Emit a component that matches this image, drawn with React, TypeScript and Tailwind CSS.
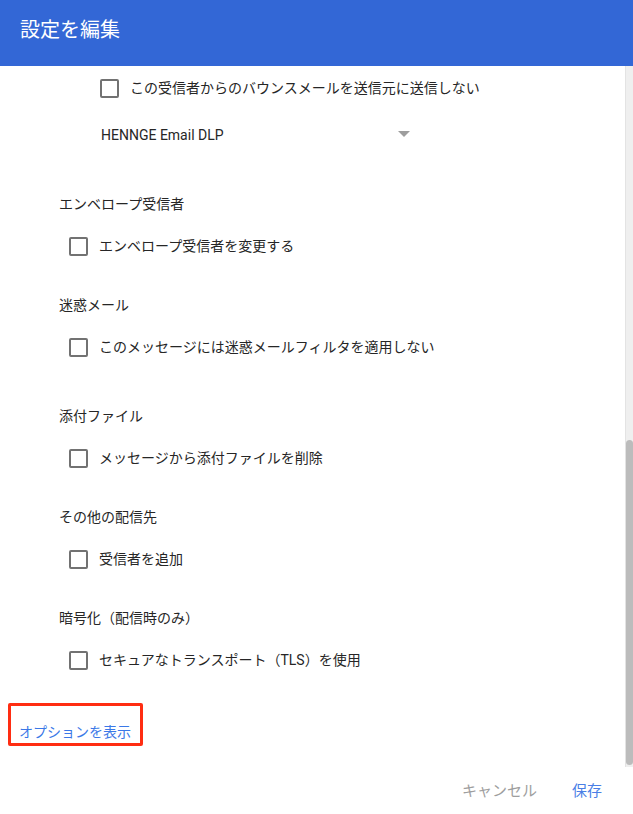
import React from "react";

const FONT = {
  fontFamily: 'Roboto, "Noto Sans CJK JP", "Noto Sans", sans-serif',
};

function Checkbox({ label }: { label: string }) {
  return (
    <label className="flex h-5 items-center gap-[11px]">
      <span className="block h-[19px] w-[19px] rounded-[2px] border-2 border-[#727272]" />
      <span className="text-[14px] leading-5 text-[#262626]">{label}</span>
    </label>
  );
}

function Section({
  title,
  option,
  gap,
}: {
  title: string;
  option: string;
  gap: string;
}) {
  return (
    <div className={`pl-[59px] ${gap}`}>
      <div className="h-5 text-[14px] leading-5 text-[#262626]">{title}</div>
      <div className="mt-[22px] pl-[10px]">
        <Checkbox label={option} />
      </div>
    </div>
  );
}

export default function App() {
  return (
    <div className="flex h-[814px] w-[633px] flex-col bg-white" style={FONT}>
      {/* Header */}
      <div className="flex h-[66px] shrink-0 items-center bg-[#3367d6] pl-5 pb-[6px]">
        <h1 className="text-[20px] font-normal leading-7 text-white">設定を編集</h1>
      </div>

      {/* Scrollable body */}
      <div className="relative h-[701px] shrink-0 overflow-hidden">
        <div className="flex h-[44px] items-center pl-[100px]">
          <Checkbox label="この受信者からのバウンスメールを送信元に送信しない" />
        </div>

        <div className="flex h-[50px] w-[410px] items-center justify-between pl-[101px]">
          <span className="text-[14px] text-[#262626]">HENNGE Email DLP</span>
          <span className="mb-[2px] h-0 w-0 border-x-[6px] border-t-[6px] border-x-transparent border-t-[#9e9e9e]" />
        </div>

        <div className="flex flex-col">
          <Section title="エンベロープ受信者" option="エンベロープ受信者を変更する" gap="mt-[34px]" />
          <Section title="迷惑メール" option="このメッセージには迷惑メールフィルタを適用しない" gap="mt-[39px]" />
          <Section title="添付ファイル" option="メッセージから添付ファイルを削除" gap="mt-[49px]" />
          <Section title="その他の配信先" option="受信者を追加" gap="mt-[39px]" />
          <Section title="暗号化（配信時のみ）" option="セキュアなトランスポート（TLS）を使用" gap="mt-[39px]" />
        </div>

        <div className="mt-[33px] pl-2">
          <div className="h-[43px] w-[135px] rounded-[2px] border-[3px] border-[#ff2d12] pl-[8px] pt-[14px]">
            <button className="text-[14px] leading-5 text-[#3b78e7]">オプションを表示</button>
          </div>
        </div>

        {/* Scrollbar */}
        <div className="absolute right-0 top-0 h-full w-2 border-l border-[#e3e3e3] bg-[#efefef]">
          <div className="absolute bottom-[2px] left-0 top-[374px] w-[7px] rounded-[4px] bg-[#bcbcbc]" />
        </div>
      </div>

      {/* Footer */}
      <div className="flex h-[47px] items-center justify-end gap-[35px] pr-[31px]">
        <button className="text-[15px] leading-5 text-[#9e9e9e]">キャンセル</button>
        <button className="text-[15px] leading-5 text-[#4a7fe6]">保存</button>
      </div>
    </div>
  );
}
